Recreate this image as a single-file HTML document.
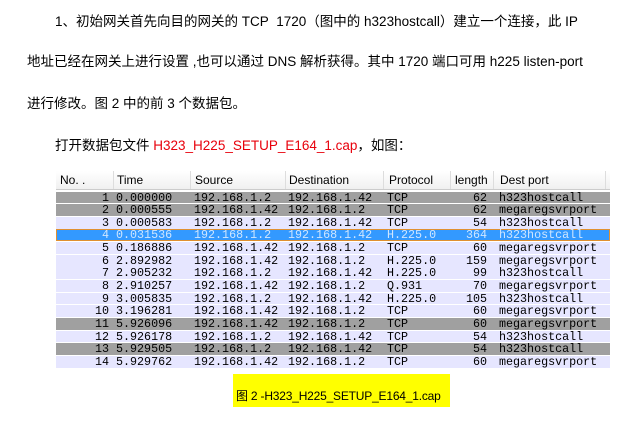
<!DOCTYPE html>
<html><head><meta charset="utf-8"><style>
body{margin:0;width:618px;height:438px;background:#fff;position:relative;overflow:hidden;font-family:"Liberation Sans","Noto Sans CJK SC",sans-serif;}
.t{position:absolute;font-size:13.5px;color:#000;white-space:nowrap;line-height:16px}
.r{color:#e8000b}
.hdr{position:absolute;left:56px;top:171px;width:554px;height:18px;background:linear-gradient(#fff,#f0f0f0);border-bottom:1px solid #ccc;font-size:12px}
.hdr span{position:absolute;top:2px}
.hdr i{position:absolute;top:0;width:1px;height:18px;background:#ddd}
.row{position:absolute;left:56px;width:554px;height:11.8px;font-family:"Liberation Mono",monospace;font-size:11.7px;line-height:12px;color:#000}
.row span{position:absolute;top:0}
.g{background:#a0a0a0}.l{background:#e6e6ff}.s{background:#3399ff;color:#cfe6ff;box-shadow:inset 0 0 0 1px #e09030}
.n{right:501px}.len{right:123px}
</style></head><body>
<div class="t" style="left:55px;top:14px">1、初始网关首先向目的网关的 TCP&nbsp; 1720（图中的 h323hostcall）建立一个连接，此 IP</div>
<div class="t" style="left:27px;top:54px">地址已经在网关上进行设置 ,也可以通过 DNS 解析获得。其中 1720 端口可用 h225 listen-port</div>
<div class="t" style="left:27px;top:96px">进行修改。图 2 中的前 3 个数据包。</div>
<div class="t" style="left:55px;top:138px">打开数据包文件 <span class="r">H323_H225_SETUP_E164_1.cap</span>，如图：</div>
<div class="hdr">
<span style="left:4px">No. .</span><i style="left:57px"></i>
<span style="left:61px">Time</span><i style="left:134px"></i>
<span style="left:139px">Source</span><i style="left:229px"></i>
<span style="left:233px">Destination</span><i style="left:327px"></i>
<span style="left:333px">Protocol</span><i style="left:394px"></i>
<span style="left:399px">length</span><i style="left:437px"></i>
<span style="left:444px">Dest port</span><i style="left:549px"></i>
</div>
<div id="rows"></div>
<script>
var d=[["g",1,"0.000000","192.168.1.2","192.168.1.42","TCP",62,"h323hostcall"],
["g",2,"0.000555","192.168.1.42","192.168.1.2","TCP",62,"megaregsvrport"],
["l",3,"0.000583","192.168.1.2","192.168.1.42","TCP",54,"h323hostcall"],
["s",4,"0.031536","192.168.1.2","192.168.1.42","H.225.0",364,"h323hostcall"],
["l",5,"0.186886","192.168.1.42","192.168.1.2","TCP",60,"megaregsvrport"],
["l",6,"2.892982","192.168.1.42","192.168.1.2","H.225.0",159,"megaregsvrport"],
["l",7,"2.905232","192.168.1.2","192.168.1.42","H.225.0",99,"h323hostcall"],
["l",8,"2.910257","192.168.1.42","192.168.1.2","Q.931",70,"megaregsvrport"],
["l",9,"3.005835","192.168.1.2","192.168.1.42","H.225.0",105,"h323hostcall"],
["l",10,"3.196281","192.168.1.42","192.168.1.2","TCP",60,"megaregsvrport"],
["g",11,"5.926096","192.168.1.42","192.168.1.2","TCP",60,"megaregsvrport"],
["l",12,"5.926178","192.168.1.2","192.168.1.42","TCP",54,"h323hostcall"],
["g",13,"5.929505","192.168.1.2","192.168.1.42","TCP",54,"h323hostcall"],
["l",14,"5.929762","192.168.1.42","192.168.1.2","TCP",60,"megaregsvrport"]];
var h="";d.forEach(function(r,i){var top=191.5+i*12.65;
h+='<div class="row '+r[0]+'" style="top:'+top+'px"><span class="n">'+r[1]+'</span><span style="left:60px">'+r[2]+'</span><span style="left:138px">'+r[3]+'</span><span style="left:232px">'+r[4]+'</span><span style="left:331px">'+r[5]+'</span><span class="len">'+r[6]+'</span><span style="left:443px">'+r[7]+'</span></div>';});
document.getElementById("rows").innerHTML=h;
</script>
<div style="position:absolute;left:233px;top:374px;width:217px;height:33px;background:#ffff00"></div>
<div class="t" style="left:236px;top:388px;font-size:12px;letter-spacing:-0.2px">图 2 -H323_H225_SETUP_E164_1.cap</div>
</body></html>
